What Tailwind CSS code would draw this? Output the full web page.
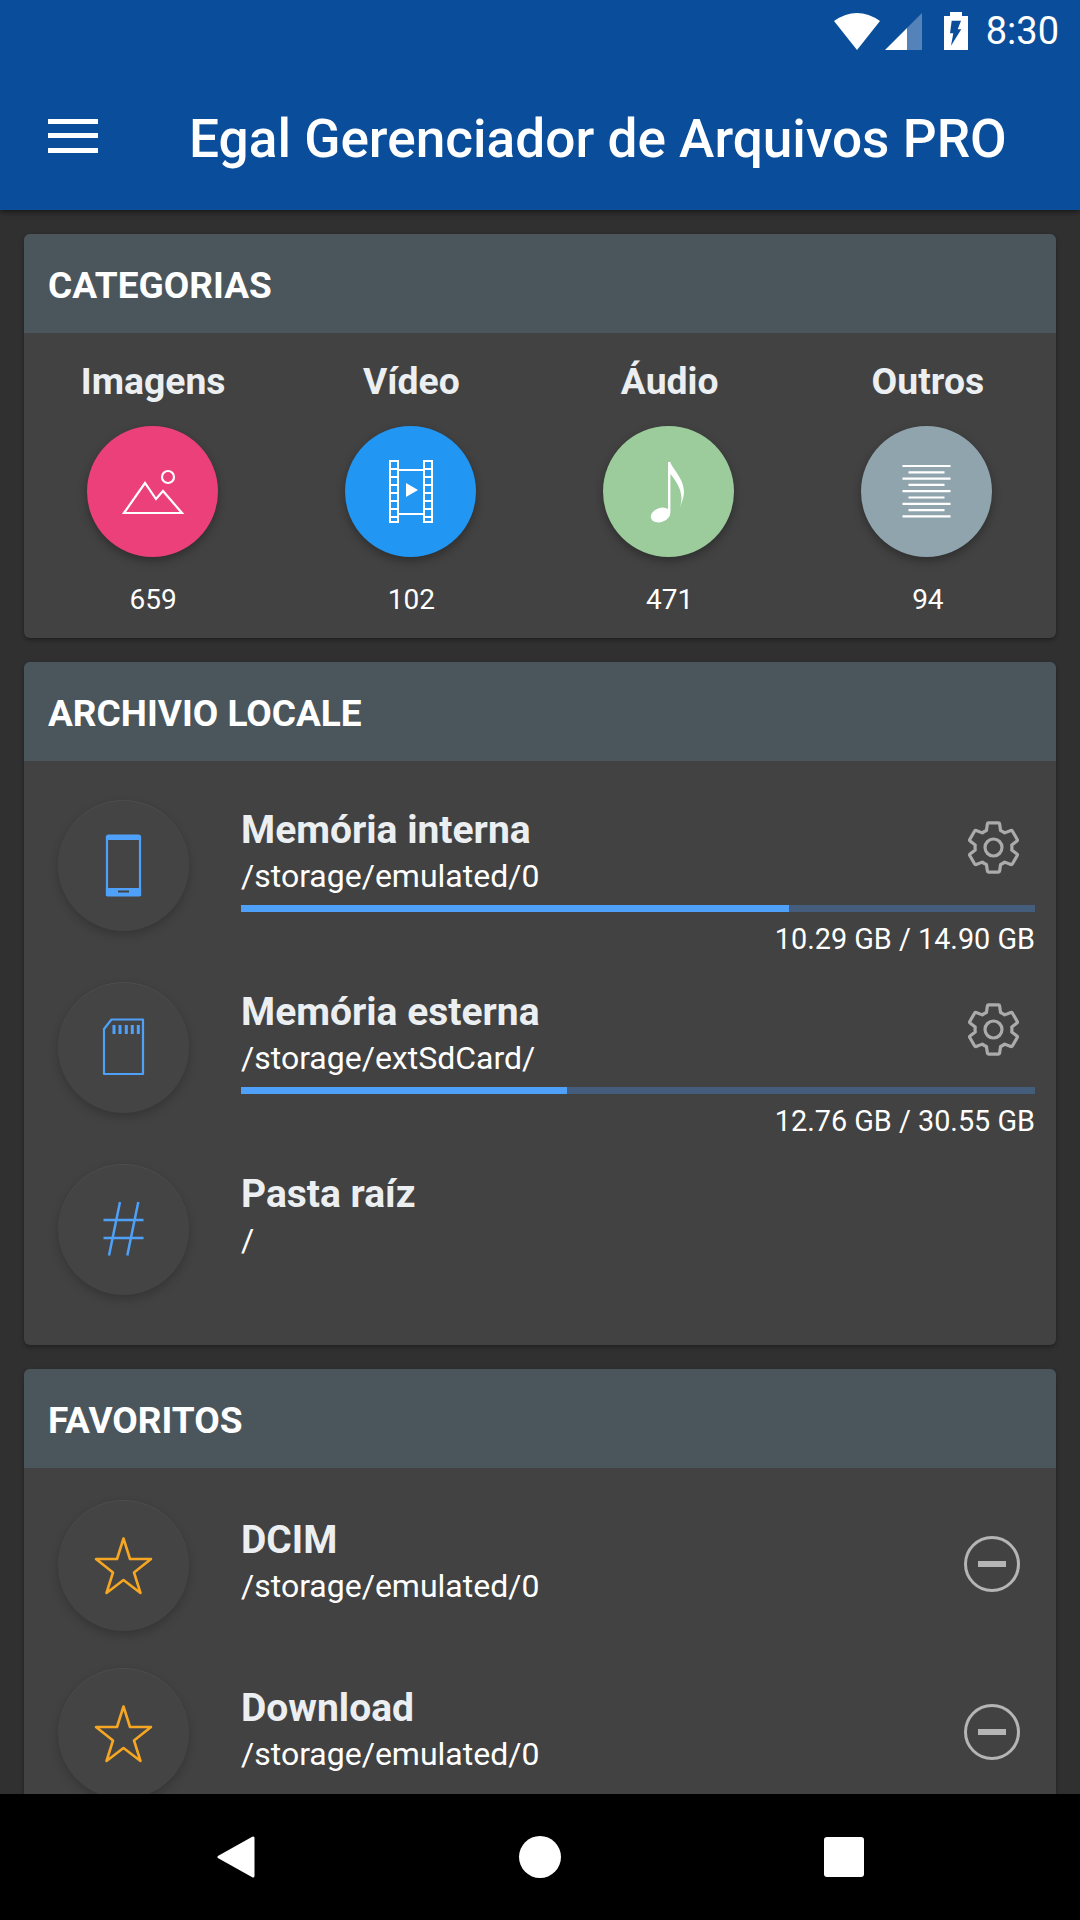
<!DOCTYPE html>
<html lang="pt">
  <head>
    <meta charset="UTF-8" />
    <meta name="viewport" content="width=device-width, initial-scale=1.0" />
    <title>Egal Gerenciador de Arquivos PRO</title>
    <script src="https://cdn.jsdelivr.net/npm/@tailwindcss/browser@4"></script>
  </head>
  <body class="bg-[#303030] [font-family:Roboto,sans-serif]">
    <div class="w-[1080px] h-[1920px] flex flex-col overflow-hidden">
      <header class="h-[210px] shrink-0 bg-[#0a4e9b] text-white shadow-[0_2px_6px_rgba(0,0,0,0.5)] z-10">
        <div class="h-[62px] flex justify-end items-center pr-[21px]">
          <svg class="w-[46px] h-[37px]" viewBox="0 0 46 37" fill="#fff"><path d="M0 8Q23 -8 46 8L23 37Z" /></svg>
          <svg class="w-[37px] h-[37px] ml-[5px]" viewBox="0 0 37 37" fill="#fff">
            <path d="M0 37L22 15V37Z" />
            <path d="M22 15L37 0V37H22Z" fill-opacity="0.3" />
          </svg>
          <svg class="w-[24px] h-[38px] ml-[22px]" viewBox="0 0 24 38">
            <path d="M6 0H18V4H24V38H0V4H6Z" fill="#fff" />
            <path d="M7.7 8.7H17L13.7 17.3H17.3L7 33.7L9.3 21.3H6Z" fill="#0a4e9b" />
          </svg>
          <span class="ml-[18px] text-[38px] leading-[40px]">8:30</span>
        </div>
        <div class="h-[148px] flex items-center pt-[4px]">
          <div class="ml-[48px] -mt-[5px] w-[50px] flex flex-col gap-[9.5px]">
            <div class="h-[5px] bg-white"></div>
            <div class="h-[5px] bg-white"></div>
            <div class="h-[5px] bg-white"></div>
          </div>
          <h1 class="ml-[91px] mt-[2px] text-[53.2px] leading-[60px] font-medium whitespace-nowrap">Egal Gerenciador de Arquivos PRO</h1>
        </div>
      </header>

      <main class="flex-1 min-h-0 overflow-hidden px-[24px] pt-[24px] flex flex-col gap-[24px]">
        <!-- categorias -->
        <section class="shrink-0 bg-[#424242] rounded-[6px] shadow-[0_2px_4px_rgba(0,0,0,0.35)] overflow-hidden">
          <h2 class="h-[99px] bg-[#4a565c] flex items-center pl-[24px] pt-[4px] text-[37px] font-bold text-white">CATEGORIAS</h2>
          <div class="grid grid-cols-4 -ml-[1px] pt-[24px] pb-[20px]">
            <div class="flex flex-col items-center">
              <span class="ml-[2px] h-[48px] leading-[48px] text-[37.3px] font-bold text-[#eceff1]">Imagens</span>
              <div class="mt-[21px] w-[131px] h-[131px] rounded-full bg-[#ec407a] shadow-[0_4px_10px_rgba(0,0,0,0.3)]">
                <svg viewBox="0 0 131 131" fill="none" stroke="#fff" stroke-width="2.2">
                  <path d="M37 87L58 57L69 73L76 65L95 87Z" />
                  <circle cx="81" cy="51" r="6" />
                </svg>
              </div>
              <span class="ml-[2px] mt-[25px] h-[36px] leading-[36px] text-[28px] text-white">659</span>
            </div>
            <div class="flex flex-col items-center">
              <span class="ml-[2px] h-[48px] leading-[48px] text-[37.3px] font-bold text-[#eceff1]">Vídeo</span>
              <div class="mt-[21px] w-[131px] h-[131px] rounded-full bg-[#2196f3] shadow-[0_4px_10px_rgba(0,0,0,0.3)]">
                <svg viewBox="0 0 131 131" fill="none" stroke="#fff" stroke-width="2">
                  <path d="M45 35H53V96H45ZM79 35H87V96H79ZM53 44H79M53 88H79" />
                  <path d="M45 43H53M45 51H53M45 59H53M45 67H53M45 75H53M45 83H53M45 91H53M79 43H87M79 51H87M79 59H87M79 67H87M79 75H87M79 83H87M79 91H87" />
                  <path d="M61 57L73 64L61 71Z" fill="#fff" stroke="none" />
                </svg>
              </div>
              <span class="ml-[2px] mt-[25px] h-[36px] leading-[36px] text-[28px] text-white">102</span>
            </div>
            <div class="flex flex-col items-center">
              <span class="ml-[2px] h-[48px] leading-[48px] text-[37.3px] font-bold text-[#eceff1]">Áudio</span>
              <div class="mt-[21px] w-[131px] h-[131px] rounded-full bg-[#9ccc9c] shadow-[0_4px_10px_rgba(0,0,0,0.3)]">
                <svg viewBox="0 0 131 131" fill="#fff">
                  <path d="M65 36H67.4C68.5 42 81 52 81 66C81 71 79 76 77 81C80 72 79 62 67.4 48V87H65Z" />
                  <ellipse cx="57.5" cy="89" rx="10" ry="7" transform="rotate(-20 57.5 89)" />
                </svg>
              </div>
              <span class="ml-[2px] mt-[25px] h-[36px] leading-[36px] text-[28px] text-white">471</span>
            </div>
            <div class="flex flex-col items-center">
              <span class="ml-[2px] h-[48px] leading-[48px] text-[37.3px] font-bold text-[#eceff1]">Outros</span>
              <div class="mt-[21px] w-[131px] h-[131px] rounded-full bg-[#90a4ae] shadow-[0_4px_10px_rgba(0,0,0,0.3)]">
                <svg viewBox="0 0 131 131" fill="none" stroke="#fff" stroke-width="2.2">
                  <path d="M41.5 40H89.5M47.5 46.3H83.5M41.5 52.6H89.5M47.5 58.9H83.5M41.5 65.2H89.5M47.5 71.5H83.5M41.5 77.8H89.5M47.5 84.1H83.5M41.5 90.4H89.5" />
                </svg>
              </div>
              <span class="ml-[2px] mt-[25px] h-[36px] leading-[36px] text-[28px] text-white">94</span>
            </div>
          </div>
        </section>

        <!-- archivio locale -->
        <section class="shrink-0 bg-[#424242] rounded-[6px] shadow-[0_2px_4px_rgba(0,0,0,0.35)] overflow-hidden">
          <h2 class="h-[99px] bg-[#4a565c] flex items-center pl-[24px] pt-[4px] text-[37px] font-bold text-white">ARCHIVIO LOCALE</h2>
          <div class="pt-[39px] pb-[50px]">
            <div class="h-[182px] flex pl-[34px] pr-[21px]">
              <div class="shrink-0 w-[131px] h-[131px] rounded-full bg-[#444444] shadow-[0_4px_10px_rgba(0,0,0,0.2),inset_0_1px_0_rgba(255,255,255,0.05)]">
                <svg viewBox="0 0 131 131" fill="none" stroke="#4fa0f8" stroke-width="2.2">
                  <rect x="49" y="35.5" width="33" height="60" rx="1.5" />
                  <path d="M49 37H82V39H49Z" fill="#4fa0f8" />
                  <path d="M49 89H82V95H49Z" fill="#4fa0f8" />
                  <path d="M60 91.5H71" stroke="#424242" stroke-width="2" />
                </svg>
              </div>
              <div class="ml-[52px] flex-1 pt-[6px]">
                <div class="flex justify-between items-center">
                  <div>
                    <div class="h-[48px] leading-[48px] text-[39px] font-bold text-[#eceff1]">Memória interna</div>
                    <div class="h-[46px] leading-[44px] text-[32px] text-white">/storage/emulated/0</div>
                  </div>
                  <svg class="w-[59px] h-[59px] mr-[12px] -mt-[12px]" viewBox="0 0 24 24" fill="none" stroke="#ababab" stroke-width="1.3" stroke-linejoin="round">
                    <path d="M19.43 12.98c.04-.32.07-.64.07-.98 0-.34-.03-.66-.07-.98l2.11-1.65c.19-.15.24-.42.12-.64l-2-3.46c-.09-.16-.26-.25-.44-.25-.06 0-.12.01-.17.03l-2.49 1c-.52-.4-1.08-.73-1.69-.98l-.38-2.65C14.46 2.18 14.25 2 14 2h-4c-.25 0-.46.18-.49.42l-.38 2.65c-.61.25-1.17.59-1.69.98l-2.49-1c-.06-.02-.12-.03-.18-.03-.17 0-.34.09-.43.25l-2 3.46c-.13.22-.07.49.12.64l2.11 1.65c-.04.32-.07.65-.07.98 0 .33.03.66.07.98l-2.11 1.65c-.19.15-.24.42-.12.64l2 3.46c.09.16.26.25.44.25.06 0 .12-.01.17-.03l2.49-1c.52.4 1.08.73 1.69.98l.38 2.65c.03.24.24.42.49.42h4c.25 0 .46-.18.49-.42l.38-2.65c.61-.25 1.17-.59 1.69-.98l2.49 1c.06.02.12.03.18.03.17 0 .34-.09.43-.25l2-3.46c.12-.22.07-.49-.12-.64l-2.11-1.65z" />
                    <circle cx="12" cy="12" r="3.45" />
                  </svg>
                </div>
                <div class="mt-[5px] h-[7px] bg-[#455d7d]"><div class="h-full bg-[#4fa0f8]" style="width: 69%"></div></div>
                <div class="mt-[9px] h-[36px] leading-[36px] text-[28.8px] text-white text-right">10.29 GB / 14.90 GB</div>
              </div>
            </div>
            <div class="h-[182px] flex pl-[34px] pr-[21px]">
              <div class="shrink-0 w-[131px] h-[131px] rounded-full bg-[#444444] shadow-[0_4px_10px_rgba(0,0,0,0.2),inset_0_1px_0_rgba(255,255,255,0.05)]">
                <svg viewBox="0 0 131 131" fill="none" stroke="#4fa0f8" stroke-width="2.2" stroke-linejoin="round">
                  <path d="M46 47L53.5 37.5H85V92H46Z" />
                  <path d="M56 43V52M62 43V52M68.3 43V52M74.3 43V52M80.3 43V52" stroke-width="3" />
                </svg>
              </div>
              <div class="ml-[52px] flex-1 pt-[6px]">
                <div class="flex justify-between items-center">
                  <div>
                    <div class="h-[48px] leading-[48px] text-[39px] font-bold text-[#eceff1]">Memória esterna</div>
                    <div class="h-[46px] leading-[44px] text-[32px] text-white">/storage/extSdCard/</div>
                  </div>
                  <svg class="w-[59px] h-[59px] mr-[12px] -mt-[12px]" viewBox="0 0 24 24" fill="none" stroke="#ababab" stroke-width="1.3" stroke-linejoin="round">
                    <path d="M19.43 12.98c.04-.32.07-.64.07-.98 0-.34-.03-.66-.07-.98l2.11-1.65c.19-.15.24-.42.12-.64l-2-3.46c-.09-.16-.26-.25-.44-.25-.06 0-.12.01-.17.03l-2.49 1c-.52-.4-1.08-.73-1.69-.98l-.38-2.65C14.46 2.18 14.25 2 14 2h-4c-.25 0-.46.18-.49.42l-.38 2.65c-.61.25-1.17.59-1.69.98l-2.49-1c-.06-.02-.12-.03-.18-.03-.17 0-.34.09-.43.25l-2 3.46c-.13.22-.07.49.12.64l2.11 1.65c-.04.32-.07.65-.07.98 0 .33.03.66.07.98l-2.11 1.65c-.19.15-.24.42-.12.64l2 3.46c.09.16.26.25.44.25.06 0 .12-.01.17-.03l2.49-1c.52.4 1.08.73 1.69.98l.38 2.65c.03.24.24.42.49.42h4c.25 0 .46-.18.49-.42l.38-2.65c.61-.25 1.17-.59 1.69-.98l2.49 1c.06.02.12.03.18.03.17 0 .34-.09.43-.25l2-3.46c.12-.22.07-.49-.12-.64l-2.11-1.65z" />
                    <circle cx="12" cy="12" r="3.45" />
                  </svg>
                </div>
                <div class="mt-[5px] h-[7px] bg-[#455d7d]"><div class="h-full bg-[#4fa0f8]" style="width: 41%"></div></div>
                <div class="mt-[9px] h-[36px] leading-[36px] text-[28.8px] text-white text-right">12.76 GB / 30.55 GB</div>
              </div>
            </div>
            <div class="h-[131px] flex pl-[34px] pr-[21px]">
              <div class="shrink-0 w-[131px] h-[131px] rounded-full bg-[#444444] shadow-[0_4px_10px_rgba(0,0,0,0.2),inset_0_1px_0_rgba(255,255,255,0.05)]">
                <svg viewBox="0 0 131 131" fill="none" stroke="#4fa0f8" stroke-width="2.5">
                  <path d="M45.5 56H85.5M45.5 74H85.5M62 38L51 91.5M80.3 38L69.3 91.5" />
                </svg>
              </div>
              <div class="ml-[52px] flex-1 pt-[6px]">
                <div class="h-[48px] leading-[48px] text-[39px] font-bold text-[#eceff1]">Pasta raíz</div>
                <div class="h-[46px] leading-[44px] text-[32px] text-white">/</div>
              </div>
            </div>
          </div>
        </section>

        <!-- favoritos -->
        <section class="shrink-0 bg-[#424242] rounded-[6px] shadow-[0_2px_4px_rgba(0,0,0,0.35)] overflow-hidden">
          <h2 class="h-[99px] bg-[#4a565c] flex items-center pl-[24px] pt-[4px] text-[37px] font-bold text-white">FAVORITOS</h2>
          <div class="pt-[32px] pb-[40px]">
            <div class="h-[168px] flex pl-[34px] pr-[36px]">
              <div class="shrink-0 w-[131px] h-[131px] rounded-full bg-[#444444] shadow-[0_4px_10px_rgba(0,0,0,0.2),inset_0_1px_0_rgba(255,255,255,0.05)]">
                <svg viewBox="0 0 131 131" fill="none" stroke="#f5a623" stroke-width="2.6" stroke-linejoin="round">
                  <path d="M65.5 38.5L72 59H93L76 72.5L82.5 93L65.5 80L48.5 93L55 72.5L38 59H59Z" />
                </svg>
              </div>
              <div class="ml-[52px] flex-1 h-[131px] flex justify-between items-center">
                <div class="-mt-[5px]">
                  <div class="h-[48px] leading-[48px] text-[39px] font-bold text-[#eceff1]">DCIM</div>
                  <div class="-mt-[2px] h-[48px] leading-[48px] text-[32px] text-white">/storage/emulated/0</div>
                </div>
                <svg class="w-[56px] h-[56px] -mt-[3px]" viewBox="0 0 56 56" fill="none" stroke="#b5b5b5">
                  <circle cx="28" cy="28" r="26.5" stroke-width="3" />
                  <path d="M14 28H42" stroke-width="6" />
                </svg>
              </div>
            </div>
            <div class="h-[168px] flex pl-[34px] pr-[36px]">
              <div class="shrink-0 w-[131px] h-[131px] rounded-full bg-[#444444] shadow-[0_4px_10px_rgba(0,0,0,0.2),inset_0_1px_0_rgba(255,255,255,0.05)]">
                <svg viewBox="0 0 131 131" fill="none" stroke="#f5a623" stroke-width="2.6" stroke-linejoin="round">
                  <path d="M65.5 38.5L72 59H93L76 72.5L82.5 93L65.5 80L48.5 93L55 72.5L38 59H59Z" />
                </svg>
              </div>
              <div class="ml-[52px] flex-1 h-[131px] flex justify-between items-center">
                <div class="-mt-[5px]">
                  <div class="h-[48px] leading-[48px] text-[39px] font-bold text-[#eceff1]">Download</div>
                  <div class="-mt-[2px] h-[48px] leading-[48px] text-[32px] text-white">/storage/emulated/0</div>
                </div>
                <svg class="w-[56px] h-[56px] -mt-[3px]" viewBox="0 0 56 56" fill="none" stroke="#b5b5b5">
                  <circle cx="28" cy="28" r="26.5" stroke-width="3" />
                  <path d="M14 28H42" stroke-width="6" />
                </svg>
              </div>
            </div>
          </div>
        </section>
      </main>

      <nav class="h-[126px] shrink-0 bg-black relative z-10 flex items-center">
        <svg class="ml-[217px] w-[38px] h-[42px]" viewBox="0 0 38 42" fill="#fff" stroke="#fff" stroke-width="3" stroke-linejoin="round"><path d="M2 21L36 2V40Z" /></svg>
        <div class="ml-[264px] w-[42px] h-[42px] rounded-full bg-white"></div>
        <div class="ml-[263px] w-[40px] h-[40px] rounded-[3px] bg-white"></div>
      </nav>
    </div>
  </body>
</html>
